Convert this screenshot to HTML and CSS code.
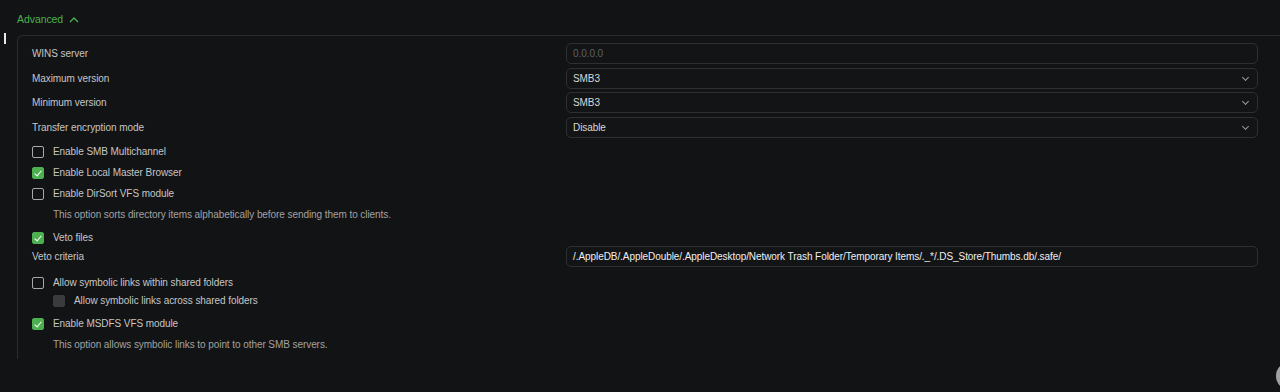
FILE: index.html
```html
<!DOCTYPE html>
<html lang="en">
<head>
    <meta charset="UTF-8">
    <meta name="viewport" content="width=device-width, initial-scale=1.0">
    <title>SMB Advanced Settings</title>
    <link rel="stylesheet" href="styles.css">
</head>
<body>

    <div class="caret-mark"></div>

    <div class="section">
        <div class="section-title">
            Advanced
            <svg class="chevron-up" width="10" height="7" viewBox="0 0 10 7">
                <path d="M1 6 L5 2 L9 6" fill="none" stroke="currentColor" stroke-width="1.3"/>
            </svg>
        </div>

        <div class="panel">
            <div class="field">
                <label>WINS server</label>
                <input class="text-input" type="text" placeholder="0.0.0.0">
            </div>
            <div class="field">
                <label>Maximum version</label>
                <div class="select">SMB3<span class="arrow"></span></div>
            </div>
            <div class="field">
                <label>Minimum version</label>
                <div class="select">SMB3<span class="arrow"></span></div>
            </div>
            <div class="field">
                <label>Transfer encryption mode</label>
                <div class="select">Disable<span class="arrow"></span></div>
            </div>

            <div class="check-row first">
                <span class="box"></span>Enable SMB Multichannel
            </div>
            <div class="check-row">
                <span class="box checked"></span>Enable Local Master Browser
            </div>
            <div class="check-row">
                <span class="box"></span>Enable DirSort VFS module
            </div>
            <div class="hint">This option sorts directory items alphabetically before sending them to clients.</div>

            <div class="check-row short">
                <span class="box checked"></span>Veto files
            </div>
            <div class="field veto">
                <label>Veto criteria</label>
                <div class="text-value">/.AppleDB/.AppleDouble/.AppleDesktop/Network Trash Folder/Temporary Items/._*/.DS_Store/Thumbs.db/.safe/</div>
            </div>

            <div class="check-row spaced">
                <span class="box"></span>Allow symbolic links within shared folders
            </div>
            <div class="check-row sub">
                <span class="box disabled"></span>Allow symbolic links across shared folders
            </div>
            <div class="check-row spaced">
                <span class="box checked"></span>Enable MSDFS VFS module
            </div>
            <div class="hint">This option allows symbolic links to point to other SMB servers.</div>
        </div>
    </div>

    <div class="scroll-top"></div>

</body>
</html>
```

FILE: styles.css
```css
body {
    font-family: 'Liberation Sans', Arial, sans-serif;
    font-size: 10px;
    letter-spacing: -0.07px;
    margin: 0;
    padding: 0;
    background-color: #121315;
    color: #c6c6c6;
    overflow: hidden;
    height: 392px;
}

.caret-mark {
    position: absolute;
    left: 4px;
    top: 33px;
    width: 2px;
    height: 11px;
    background-color: #e8e8e8;
}

.section {
    padding-left: 17px;
    padding-top: 12px;
}

.section-title {
    color: #4caf50;
    font-size: 10.5px;
    height: 14px;
    line-height: 14px;
    display: flex;
    align-items: center;
    gap: 6px;
}

.chevron-up {
    color: #4caf50;
}

.panel {
    margin-top: 9px;
    width: 1280px;
    border-top: 1px solid #2b2c2f;
    border-left: 1px solid #2b2c2f;
    border-top-left-radius: 6px;
    padding: 7px 0 4px 14px;
}

.field {
    display: flex;
    align-items: center;
    height: 21px;
    margin-bottom: 3.5px;
}

.field label {
    width: 534px;
    flex-shrink: 0;
}

.text-input, .select, .text-value {
    box-sizing: border-box;
    width: 692px;
    height: 21px;
    border: 1px solid #2e2f33;
    border-radius: 5px;
    background-color: #131416;
    color: #d8d8d8;
    font-family: inherit;
    font-size: 10px;
    letter-spacing: -0.07px;
    padding: 0 6px;
    display: flex;
    align-items: center;
    position: relative;
}

.text-input {
    outline: none;
}

.text-input::placeholder {
    color: #5f6064;
}

.text-value {
    color: #f0f0f0;
}

.arrow {
    position: absolute;
    right: 9px;
    top: 6px;
    width: 4px;
    height: 4px;
    border-right: 1.3px solid #9a9a9a;
    border-bottom: 1.3px solid #9a9a9a;
    transform: rotate(45deg);
}

.check-row {
    display: flex;
    align-items: center;
    height: 21px;
    gap: 9px;
}

.check-row.first {
    margin-top: 0;
}

.check-row.short {
    height: 17px;
    margin-top: 4px;
}

.check-row.spaced {
    margin-top: 5px;
}

.check-row.sub {
    height: 15px;
    padding-left: 21px;
}

.field.veto {
    margin-bottom: 0;
}

.box {
    box-sizing: border-box;
    width: 12px;
    height: 12px;
    border: 1px solid #a8a8a8;
    border-radius: 2px;
    flex-shrink: 0;
    position: relative;
}

.box.checked {
    background-color: #4caf50;
    border-color: #4caf50;
}

.box.checked::after {
    content: '';
    position: absolute;
    left: 3px;
    top: 1px;
    width: 3px;
    height: 6px;
    border-right: 1.5px solid #ffffff;
    border-bottom: 1.5px solid #ffffff;
    transform: rotate(40deg);
}

.box.disabled {
    background-color: #3a3b3d;
    border-color: #3a3b3d;
}

.hint {
    height: 21px;
    line-height: 21px;
    padding-left: 21px;
    color: #a2a2a2;
}

.scroll-top {
    position: absolute;
    left: 1276px;
    top: 362px;
    width: 28px;
    height: 28px;
    border-radius: 50%;
    background-color: #a0a1a3;
}
```
